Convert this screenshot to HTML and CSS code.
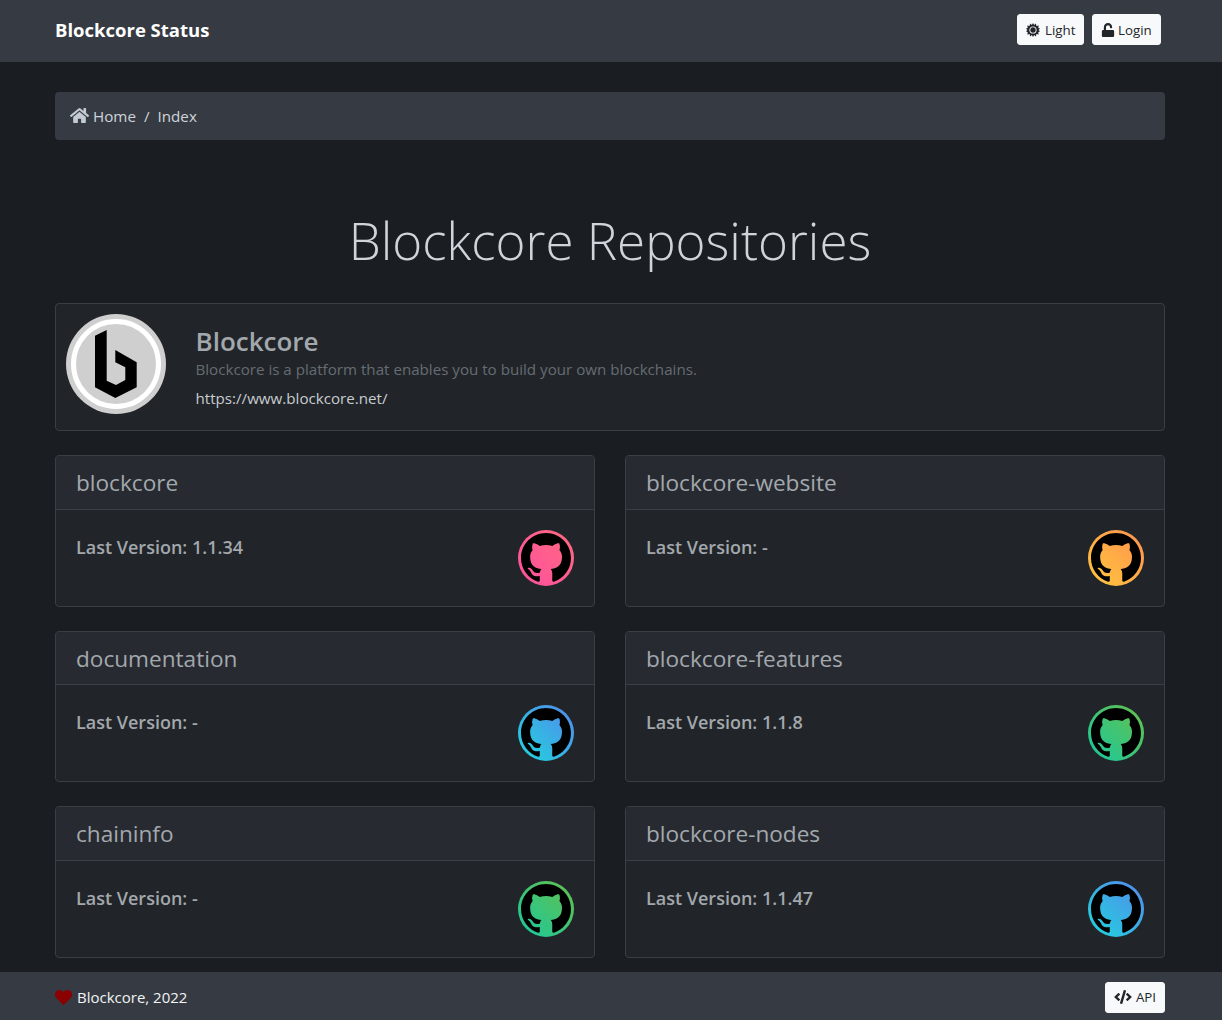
FILE: index.html
```html
<!DOCTYPE html>
<html lang="en">
<head>
  <meta charset="UTF-8">
  <meta name="viewport" content="width=device-width, initial-scale=1.0">
  <title>Blockcore Status</title>
  <link rel="stylesheet" href="styles.css">
</head>
<body>
  <svg class="defs" width="0" height="0">
    <defs>
      <linearGradient id="grad-pink" x1="1" y1="0" x2="0" y2="1"><stop offset="0" stop-color="#ff6b7f"/><stop offset="1" stop-color="#ff4fa0"/></linearGradient>
      <linearGradient id="grad-orange" x1="1" y1="0" x2="0" y2="1"><stop offset="0" stop-color="#ff9050"/><stop offset="1" stop-color="#ffc83c"/></linearGradient>
      <linearGradient id="grad-blue" x1="1" y1="0" x2="0" y2="1"><stop offset="0" stop-color="#5588ee"/><stop offset="1" stop-color="#1ed6dc"/></linearGradient>
      <linearGradient id="grad-green" x1="1" y1="0" x2="0" y2="1"><stop offset="0" stop-color="#66c04a"/><stop offset="1" stop-color="#18c9a0"/></linearGradient>
      <symbol id="octocat" viewBox="0 0 56 56">
        <path transform="translate(3 3) scale(3.125)" fill="#000" d="M8 0C3.58 0 0 3.58 0 8c0 3.54 2.29 6.53 5.47 7.59.4.07.55-.17.55-.38 0-.19-.01-.82-.01-1.49-2.01.37-2.53-.49-2.69-.94-.09-.23-.48-.94-.82-1.13-.28-.15-.68-.52-.01-.53.63-.01 1.08.58 1.23.82.72 1.21 1.87.87 2.33.66.07-.52.28-.87.51-1.07-1.78-.2-3.64-.89-3.64-3.95 0-.87.31-1.59.82-2.15-.08-.2-.36-1.02.08-2.12 0 0 .67-.21 2.2.82.64-.18 1.32-.27 2-.27.68 0 1.36.09 2 .27 1.53-1.04 2.2-.82 2.2-.82.44 1.1.16 1.92.08 2.12.51.56.82 1.27.82 2.15 0 3.07-1.87 3.75-3.65 3.95.29.25.54.73.54 1.48 0 1.07-.01 1.93-.01 2.2 0 .21.15.46.55.38A8.013 8.013 0 0016 8c0-4.42-3.58-8-8-8z"/>
      </symbol>
    </defs>
  </svg>

  <nav class="topbar">
    <a class="brand" href="#">Blockcore Status</a>
    <div class="topbar-buttons">
      <button class="btn btn-theme">
        <svg class="icon" viewBox="0 0 24 24"><path fill="currentColor" d="M12 0l2 3.6L17 1l.8 4 4-.8-.8 4 3 1.800-2.600 2 2.600 2-3 1.800.8 4-4-.8L17 23l-3-2.600L12 24l-2-3.600L7 23l-.8-4-4 .8.8-4L0 14l2.600-2L0 10l3-1.800-.8-4 4 .8L7 1l3 2.600z"/><circle cx="12" cy="12" r="6.200" fill="#f8f9fa"/><circle cx="12" cy="12" r="4.600" fill="currentColor"/></svg>
        Light
      </button>
      <button class="btn btn-login">
        <svg class="icon" viewBox="0 0 448 512"><path fill="currentColor" d="M400 256H152V152.900c0-39.600 31.700-72.500 71.300-72.900 40-.4 72.700 32.100 72.700 72v16c0 13.300 10.700 24 24 24h32c13.300 0 24-10.700 24-24v-16C376 68 307.500-.3 223.500 0 139.500.3 72 69.500 72 153.500V256H48c-26.500 0-48 21.500-48 48v160c0 26.500 21.500 48 48 48h352c26.500 0 48-21.500 48-48V304c0-26.500-21.500-48-48-48z"/></svg>
        Login
      </button>
    </div>
  </nav>

  <main class="container">
    <div class="breadcrumb">
      <svg class="icon home-icon" viewBox="0 0 576 512"><path fill="currentColor" d="M280.370 148.260L96 300.110V464a16 16 0 0 0 16 16l112.060-.29a16 16 0 0 0 15.920-16V368a16 16 0 0 1 16-16h64a16 16 0 0 1 16 16v95.640a16 16 0 0 0 16 16.050L464 480a16 16 0 0 0 16-16V300L295.670 148.260a12.190 12.190 0 0 0-15.300 0zM571.600 251.470L488 182.560V44.050a12 12 0 0 0-12-12h-56a12 12 0 0 0-12 12v72.610L318.470 43a48 48 0 0 0-61 0L4.340 251.470a12 12 0 0 0-1.600 16.900l25.500 31A12 12 0 0 0 45.150 301l235.220-193.740a12.190 12.190 0 0 1 15.300 0L530.900 301a12 12 0 0 0 16.900-1.600l25.500-31a12 12 0 0 0-1.700-16.930z"/></svg>
      <span>Home</span>
      <span class="crumb-sep">/</span>
      <span>Index</span>
    </div>

    <h1 class="page-title">Blockcore Repositories</h1>

    <section class="card org-card">
      <svg class="org-logo" viewBox="0 0 100 100">
        <circle cx="50" cy="50" r="50" fill="#cfcfcf"/>
        <circle cx="50" cy="50" r="42.500" fill="none" stroke="#fff" stroke-width="5"/>
        <path fill="#000" d="M29 21.700L40.700 16v50.700L50 71l9.300-5V53.300l-10-5V36l21.400 12.300v25L49.300 84 29 73.300z"/>
      </svg>
      <div class="org-text">
        <h2 class="org-name">Blockcore</h2>
        <p class="org-desc">Blockcore is a platform that enables you to build your own blockchains.</p>
        <a class="org-link" href="#">https://www.blockcore.net/</a>
      </div>
    </section>

    <div class="repo-grid">
      <section class="card repo">
        <header class="repo-head">blockcore</header>
        <div class="repo-body"><strong>Last Version: 1.1.34</strong>
          <svg class="repo-icon" viewBox="0 0 56 56"><circle cx="28" cy="28" r="28" fill="url(#grad-pink)"/><use href="#octocat"/></svg></div>
      </section>
      <section class="card repo">
        <header class="repo-head">blockcore-website</header>
        <div class="repo-body"><strong>Last Version: -</strong>
          <svg class="repo-icon" viewBox="0 0 56 56"><circle cx="28" cy="28" r="28" fill="url(#grad-orange)"/><use href="#octocat"/></svg></div>
      </section>
      <section class="card repo">
        <header class="repo-head">documentation</header>
        <div class="repo-body"><strong>Last Version: -</strong>
          <svg class="repo-icon" viewBox="0 0 56 56"><circle cx="28" cy="28" r="28" fill="url(#grad-blue)"/><use href="#octocat"/></svg></div>
      </section>
      <section class="card repo">
        <header class="repo-head">blockcore-features</header>
        <div class="repo-body"><strong>Last Version: 1.1.8</strong>
          <svg class="repo-icon" viewBox="0 0 56 56"><circle cx="28" cy="28" r="28" fill="url(#grad-green)"/><use href="#octocat"/></svg></div>
      </section>
      <section class="card repo">
        <header class="repo-head">chaininfo</header>
        <div class="repo-body"><strong>Last Version: -</strong>
          <svg class="repo-icon" viewBox="0 0 56 56"><circle cx="28" cy="28" r="28" fill="url(#grad-green)"/><use href="#octocat"/></svg></div>
      </section>
      <section class="card repo">
        <header class="repo-head">blockcore-nodes</header>
        <div class="repo-body"><strong>Last Version: 1.1.47</strong>
          <svg class="repo-icon" viewBox="0 0 56 56"><circle cx="28" cy="28" r="28" fill="url(#grad-blue)"/><use href="#octocat"/></svg></div>
      </section>
    </div>
  </main>

  <footer class="footer">
    <div class="footer-left">
      <svg class="heart" viewBox="0 0 512 512"><path fill="#8b0000" d="M462.300 62.600C407.500 15.900 326 24.300 275.700 76.200L256 96.500l-19.700-20.300C186.100 24.300 104.500 15.900 49.700 62.600c-62.800 53.600-66.100 149.800-9.900 207.900l193.500 199.800c12.500 12.900 32.800 12.900 45.300 0l193.500-199.800c56.300-58.100 53-154.300-9.800-207.900z"/></svg>
      <span>Blockcore, 2022</span>
    </div>
    <button class="btn">
      <svg class="icon code-icon" viewBox="0 0 640 512"><path fill="currentColor" d="M278.900 511.500l-61-17.700c-6.400-1.800-10-8.500-8.200-14.900L346.200 8.700c1.800-6.400 8.500-10.100 14.900-8.200l61 17.700c6.400 1.800 10 8.500 8.200 14.900L293.800 503.300c-1.900 6.400-8.500 10.100-14.900 8.200zm-114-112.200l43.500-46.400c4.600-4.900 4.300-12.700-.8-17.200L117 256l90.600-79.700c5.100-4.500 5.500-12.300.8-17.200l-43.500-46.400c-4.500-4.800-12.100-5.100-17-.5L3.800 247.200c-5.100 4.700-5.100 12.800 0 17.500l144.100 135.100c4.900 4.600 12.500 4.400 17-.5zm327.200.6l144.100-135.100c5.100-4.700 5.100-12.800 0-17.500L492.100 112.100c-4.800-4.500-12.400-4.300-17 .5L431.600 159c-4.600 4.900-4.300 12.700.8 17.200L523 256l-90.600 79.700c-5.100 4.500-5.500 12.300-.8 17.200l43.500 46.400c4.500 4.900 12.100 5.100 17 .6z"/></svg>
      API
    </button>
  </footer>
</body>
</html>
```

FILE: styles.css
```css
* {
  box-sizing: border-box;
}
body {
  margin: 0;
  background-color: #1a1d21;
  color: #adb5bd;
  font-family: "Open Sans", "Noto Sans", sans-serif;
  font-size: 15.150px;
}
.defs {
  display: block;
  height: 0;
}
.topbar {
  height: 62px;
  background-color: #363b43;
  display: flex;
  align-items: center;
  justify-content: space-between;
  padding: 0 61px 3px 55px;
}
.brand {
  color: #fff;
  font-size: 18.500px;
  font-weight: 700;
  text-decoration: none;
}
.topbar-buttons {
  display: flex;
  gap: 8px;
}
.btn {
  height: 31px;
  padding: 0 8px;
  display: flex;
  align-items: center;
  gap: 4px;
  background-color: #f8f9fa;
  color: #212529;
  border: 1px solid #f8f9fa;
  border-radius: 3px;
  font-family: inherit;
  font-size: 13.300px;
}
.btn-theme {
  width: 67px;
  gap: 5px;
}
.btn-login {
  width: 69px;
  gap: 3px;
}
.icon {
  width: 14px;
  height: 14px;
  flex: none;
}
.code-icon {
  width: 18px;
}
.container {
  width: 1110px;
  margin-left: 55px;
  padding-top: 30px;
}
.breadcrumb {
  height: 48px;
  background-color: #363b43;
  border-radius: 4px;
  display: flex;
  align-items: center;
  padding: 0 15px 1px;
  gap: 8px;
  color: #ced4da;
  font-size: 15.200px;
}
.home-icon {
  width: 19px;
  height: 17px;
  margin-right: -4px;
  color: #c3cad3;
}
.page-title {
  margin: 0;
  height: 163px;
  padding-top: 61px;
  text-align: center;
  font-size: 51.100px;
  font-weight: 300;
  line-height: 78px;
  color: #ced4da;
}
.card {
  background-color: #212529;
  border: 1px solid #3a3f46;
  border-radius: 4px;
}
.org-card {
  height: 128px;
  display: flex;
  padding: 10px;
  gap: 29.500px;
  margin-bottom: 24px;
}
.org-logo {
  width: 100px;
  height: 100px;
  flex: none;
}
.org-text {
  padding-top: 9px;
}
.org-name {
  margin: 0;
  font-size: 26px;
  font-weight: 600;
  line-height: 36px;
  color: #a3a8ad;
}
.org-desc {
  margin: 0 0 8px;
  line-height: 21px;
  color: #666c73;
}
.org-link {
  color: #c8ccd0;
  text-decoration: none;
}
.repo-grid {
  display: grid;
  grid-template-columns: 540px 540px;
  column-gap: 30px;
  row-gap: 24px;
  padding-bottom: 14.200px;
}
.repo {
  height: 151.600px;
  overflow: hidden;
}
.repo-head {
  height: 53.600px;
  padding: 0 20px;
  background-color: #272b31;
  border-bottom: 1px solid #3a3f46;
  font-size: 22.600px;
  line-height: 54px;
  color: #a3a8ad;
}
.repo-body {
  display: flex;
  justify-content: space-between;
  padding: 20px;
  font-size: 18px;
  color: #a3a8ad;
}
.repo-body strong {
  font-weight: 600;
  line-height: 34px;
}
.repo-icon {
  width: 56px;
  height: 56px;
}
.footer {
  height: 48px;
  background-color: #363b43;
  display: flex;
  align-items: center;
  justify-content: space-between;
  padding: 3px 57px 0 55px;
  color: #f1f3f5;
  font-size: 15px;
}
.footer-left {
  display: flex;
  align-items: center;
  gap: 5px;
}
.heart {
  width: 17px;
  height: 17px;
}
```
